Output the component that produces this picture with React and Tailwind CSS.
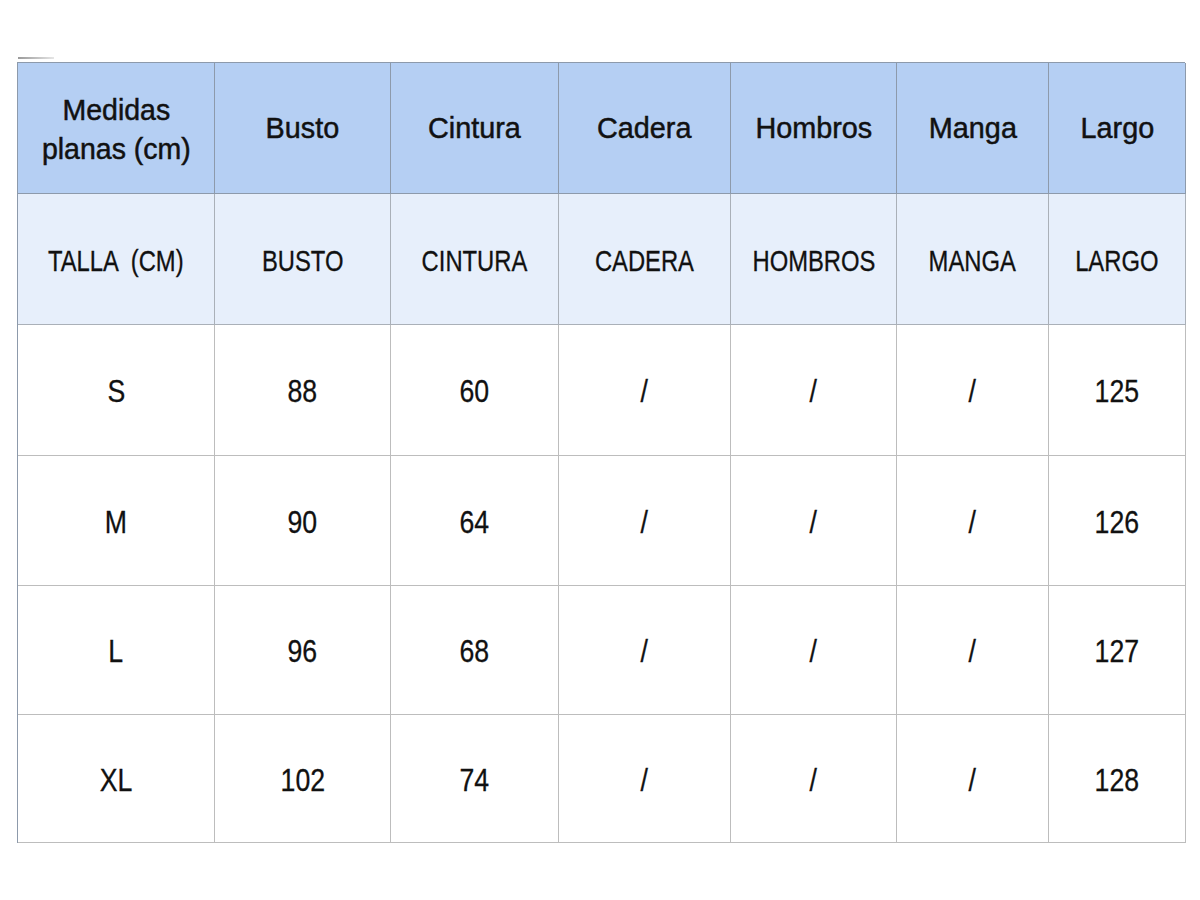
import React from "react";

const head1 = ["Busto", "Cintura", "Cadera", "Hombros", "Manga", "Largo"];
const head2 = ["TALLA  (CM)", "BUSTO", "CINTURA", "CADERA", "HOMBROS", "MANGA", "LARGO"];
const rows = [
  ["S", "88", "60", "/", "/", "/", "125"],
  ["M", "90", "64", "/", "/", "/", "126"],
  ["L", "96", "68", "/", "/", "/", "127"],
  ["XL", "102", "74", "/", "/", "/", "128"],
];

export default function App() {
  return (
    <div className="w-[1200px] h-[900px] bg-white text-[#111] font-['Liberation_Sans',Arial,sans-serif] pt-[57px]">
      <div className="ml-[18px] w-[36px] h-[2px] bg-gradient-to-r from-[#9a9a9a] to-[#e6e6e6]" />
      <div className="ml-[17px] mt-[3px] w-[1168px] grid grid-cols-[197px_176px_168px_172px_166px_152px_137px] grid-rows-[131px_131px_131px_130px_129px_128px] border-t border-l border-[#8d9aab]">
        <div className="border-r border-b border-[#8d9aab] bg-[#b5cff3] flex items-center justify-center text-center pt-[1px]">
          <span className="inline-block scale-x-[0.95] text-[30px] leading-[39px] [-webkit-text-stroke:0.5px_#111]">
            Medidas
            <br />
            planas (cm)
          </span>
        </div>
        {head1.map((t) => (
          <div key={t} className="border-r border-b border-[#8d9aab] bg-[#b5cff3] flex items-center justify-center">
            <span className="inline-block scale-x-[0.96] text-[30px] leading-none [-webkit-text-stroke:0.5px_#111]">{t}</span>
          </div>
        ))}
        {head2.map((t) => (
          <div key={t} className="border-r border-b border-[#aab0b8] bg-[#e7effb] flex items-center justify-center pt-[5px]">
            <span className="inline-block scale-x-[0.82] text-[29px] leading-none whitespace-pre [-webkit-text-stroke:0.3px_#111]">{t}</span>
          </div>
        ))}
        {rows.map((r, ri) =>
          r.map((c, ci) => (
            <div key={ri + "-" + ci} className="border-r border-b border-[#bdbdbd] bg-white flex items-center justify-center pt-[3px]">
              <span className="inline-block scale-x-[0.86] text-[31px] leading-none [-webkit-text-stroke:0.3px_#111]">{c}</span>
            </div>
          ))
        )}
      </div>
    </div>
  );
}
